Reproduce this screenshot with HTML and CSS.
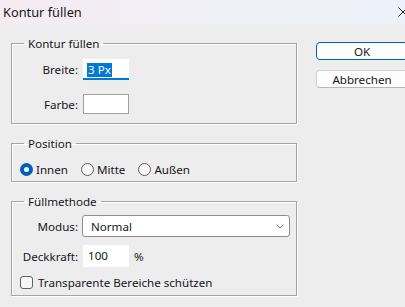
FILE: index.html
```html
<!DOCTYPE html>
<html lang="de">
<head>
    <meta charset="UTF-8">
    <title>Kontur füllen</title>
    <link rel="stylesheet" href="styles.css">
</head>
<body>
    <div class="titlebar">
        <span class="title">Kontur füllen</span>
        <svg class="close" width="10" height="10" viewBox="0 0 10 10">
            <path d="M0.5 0.5 L9.5 9.5 M9.5 0.5 L0.5 9.5" stroke="#222" stroke-width="1" fill="none"/>
        </svg>
    </div>

    <div class="dialog">
        <div class="groups">
            <fieldset class="group">
                <legend>Kontur füllen</legend>
                <div class="group-body stroke-body">
                    <div class="row">
                        <span class="label">Breite:</span>
                        <span class="field field-active"><span class="selected">3 Px</span></span>
                    </div>
                    <div class="row">
                        <span class="label">Farbe:</span>
                        <span class="field swatch"></span>
                    </div>
                </div>
            </fieldset>

            <fieldset class="group">
                <legend>Position</legend>
                <div class="group-body position-body">
                    <span class="option"><span class="radio checked"></span>Innen</span>
                    <span class="option"><span class="radio"></span>Mitte</span>
                    <span class="option"><span class="radio"></span>Außen</span>
                </div>
            </fieldset>

            <fieldset class="group">
                <legend>Füllmethode</legend>
                <div class="group-body blend-body">
                    <div class="row">
                        <span class="label">Modus:</span>
                        <span class="select">
                            Normal
                            <svg class="chevron" width="8" height="5" viewBox="0 0 8 5">
                                <path d="M0.5 0.5 L4 4 L7.5 0.5" stroke="#6a6a6a" stroke-width="1" fill="none"/>
                            </svg>
                        </span>
                    </div>
                    <div class="row">
                        <span class="label">Deckkraft:</span>
                        <span class="field field-plain">100</span>
                        <span class="unit">%</span>
                    </div>
                    <div class="check-row">
                        <span class="checkbox"></span>Transparente Bereiche schützen
                    </div>
                </div>
            </fieldset>
        </div>

        <div class="buttons">
            <button class="btn btn-default">OK</button>
            <button class="btn">Abbrechen</button>
        </div>
    </div>
</body>
</html>
```

FILE: styles.css
```css
:root {
    --bg-color: #ededed;
    --text-color: #161622;
    --frame-color: #a5a5a5;
    --accent-color: #005fb8;
    --select-color: #0078d7;
}

body {
    margin: 0;
    width: 405px;
    height: 307px;
    overflow: hidden;
    background-color: var(--bg-color);
    color: var(--text-color);
    font-family: 'Noto Sans', 'Open Sans', sans-serif;
    font-size: 11.6px;
    line-height: 15px;
}

/* Title bar */
.titlebar {
    height: 24px;
    display: flex;
    align-items: center;
    justify-content: space-between;
    padding-left: 3px;
    background: linear-gradient(90deg, #f6ebf0 0%, #f0eff6 45%, #edf1f9 100%);
}

.title {
    font-size: 12.8px;
}

.close {
    margin-right: -3px;
    flex-shrink: 0;
}

/* Dialog body */
.dialog {
    display: flex;
    gap: 19px;
    padding: 12px 0 0 11px;
}

.groups {
    display: flex;
    flex-direction: column;
    gap: 12px;
    width: 286px;
    flex-shrink: 0;
}

.group {
    margin: 0;
    padding: 0;
    min-width: 0;
    border: 1px solid var(--frame-color);
    box-shadow: 1px 1px 0 #fff, inset 1px 1px 0 #fff;
}

.group legend {
    margin-left: 12px;
    padding: 0 4px;
    line-height: 15px;
}

.group-body {
    display: flex;
    flex-direction: column;
}

.row {
    display: flex;
    align-items: center;
}

.label {
    width: 66px;
    text-align: right;
    margin-right: 5px;
}

/* Kontur füllen */
.stroke-body {
    padding: 8px 0 9px;
    gap: 14px;
}

.field {
    box-sizing: border-box;
    width: 46px;
    background-color: #fff;
}

.field-active {
    height: 21px;
    padding: 3px 0 0 4px;
    border-bottom: 2px solid var(--select-color);
}

.selected {
    display: inline-block;
    height: 14px;
    line-height: 14px;
    padding: 0 1px;
    background-color: var(--select-color);
    color: #fff;
}

.swatch {
    height: 20px;
    border: 1px solid #a0a0a0;
}

/* Position */
.position-body {
    flex-direction: row;
    align-items: center;
    padding: 11px 0 4px 8px;
    height: 15px;
}

.option {
    display: flex;
    align-items: center;
    margin-right: 13px;
}

.radio {
    box-sizing: border-box;
    width: 13px;
    height: 13px;
    margin-right: 3px;
    border: 1px solid #5f5f5f;
    border-radius: 50%;
    background-color: #f7f7f7;
}

.radio.checked {
    border: 4px solid var(--accent-color);
    background-color: #fff;
}

/* Füllmethode */
.blend-body {
    padding: 6px 0 5px;
    gap: 8px;
}

.blend-body .row {
    height: 22px;
}

.select {
    box-sizing: border-box;
    width: 208px;
    height: 22px;
    margin-left: -1px;
    padding-left: 8px;
    display: flex;
    align-items: center;
    justify-content: space-between;
    background-color: #fff;
    border: 1px solid #8c8c8c;
    border-radius: 3px;
}

.chevron {
    margin-right: 5px;
}

.field-plain {
    height: 22px;
    padding: 3px 0 0 5px;
}

.unit {
    margin-left: 5px;
}

.check-row {
    display: flex;
    align-items: center;
    height: 15px;
    padding-left: 8px;
}

.checkbox {
    box-sizing: border-box;
    width: 13px;
    height: 13px;
    margin-right: 5px;
    border: 1px solid #616161;
    border-radius: 3px;
    background-color: #f7f7f7;
}

/* Buttons */
.buttons {
    display: flex;
    flex-direction: column;
    gap: 10px;
    padding-top: 6px;
}

.btn {
    box-sizing: border-box;
    width: 92px;
    height: 18px;
    padding: 0;
    font-family: inherit;
    font-size: 11.6px;
    color: var(--text-color);
    background-color: #fdfdfd;
    border: 1px solid #d0d0d0;
    border-bottom-color: #b8b8b8;
    border-radius: 4px;
}

.btn-default {
    border: 1px solid var(--accent-color);
}
```
